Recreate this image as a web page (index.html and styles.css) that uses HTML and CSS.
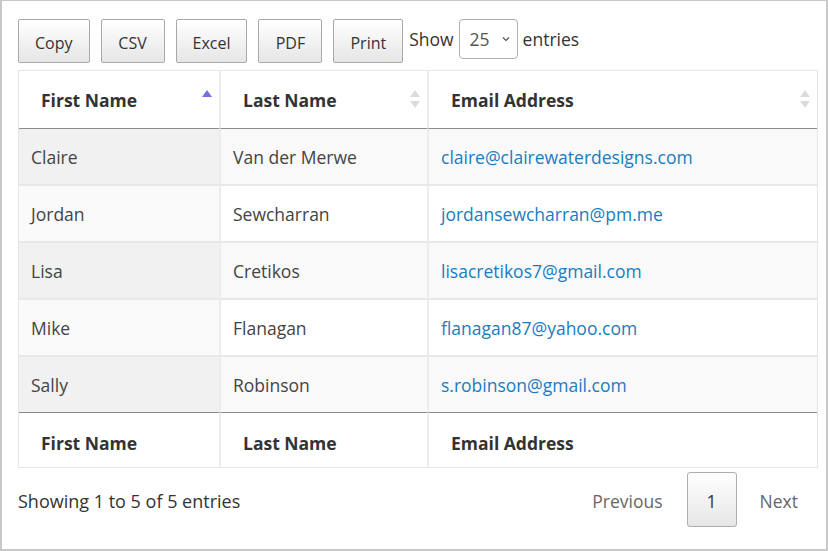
FILE: index.html
```html
<!DOCTYPE html>
<html>
<head>
<meta charset="utf-8">
<link rel="stylesheet" href="styles.css">
</head>
<body>
<div class="frame">
  <div class="toolbar">
    <div class="buttons">
      <button class="btn">Copy</button>
      <button class="btn">CSV</button>
      <button class="btn">Excel</button>
      <button class="btn">PDF</button>
      <button class="btn">Print</button>
    </div>
    <label class="length">Show
      <span class="select"><span class="select-val">25</span><svg class="chev" width="8" height="6" viewBox="0 0 8 6"><path d="M1 1.5 L4 4.5 L7 1.5" fill="none" stroke="#555" stroke-width="1.2"/></svg></span>
      entries</label>
  </div>
  <table class="grid">
    <colgroup><col class="c1"><col class="c2"><col class="c3"></colgroup>
    <thead>
      <tr>
        <th class="sortable">First Name<svg class="sort" width="12" height="22" viewBox="0 0 12 22"><path d="M1 9 L6 2 L11 9 Z" fill="#7272dc"/></svg></th>
        <th class="sortable">Last Name<svg class="sort" width="12" height="22" viewBox="0 0 12 22"><path d="M1 9 L6 2 L11 9 Z M1 13 L6 20 L11 13 Z" fill="#dcdcdc"/></svg></th>
        <th class="sortable">Email Address<svg class="sort" width="12" height="22" viewBox="0 0 12 22"><path d="M1 9 L6 2 L11 9 Z M1 13 L6 20 L11 13 Z" fill="#dcdcdc"/></svg></th>
      </tr>
    </thead>
    <tbody>
      <tr class="odd"><td>Claire</td><td>Van der Merwe</td><td><a href="#">claire@clairewaterdesigns.com</a></td></tr>
      <tr class="even"><td>Jordan</td><td>Sewcharran</td><td><a href="#">jordansewcharran@pm.me</a></td></tr>
      <tr class="odd"><td>Lisa</td><td>Cretikos</td><td><a href="#">lisacretikos7@gmail.com</a></td></tr>
      <tr class="even"><td>Mike</td><td>Flanagan</td><td><a href="#">flanagan87@yahoo.com</a></td></tr>
      <tr class="odd"><td>Sally</td><td>Robinson</td><td><a href="#">s.robinson@gmail.com</a></td></tr>
    </tbody>
    <tfoot>
      <tr><th>First Name</th><th>Last Name</th><th>Email Address</th></tr>
    </tfoot>
  </table>
  <div class="bottom">
    <div class="info">Showing 1 to 5 of 5 entries</div>
    <div class="paging">
      <span class="plink">Previous</span>
      <span class="btn page">1</span>
      <span class="plink next">Next</span>
    </div>
  </div>
</div>
</body>
</html>
```
FILE: styles.css
```css
html, body {
  margin: 0;
  padding: 0;
  background: #fff;
}
.frame {
  box-sizing: border-box;
  width: 828px;
  height: 551px;
  border: 2px solid #c8c8c8;
  border-top-width: 1px;
  padding: 18px 0 0 16px;
  font-family: "Open Sans", "Noto Sans", sans-serif;
  font-size: 17.5px;
  color: #333;
}
.toolbar {
  display: flex;
  align-items: flex-start;
  height: 43px;
}
.buttons {
  display: flex;
  gap: 11px;
}
.btn {
  box-sizing: border-box;
  height: 44px;
  min-width: 64px;
  padding: 3px 16px 0;
  border: 1px solid #a9a9a9;
  border-radius: 2px;
  background: linear-gradient(to bottom, #ffffff 0%, #e6e6e6 100%);
  font-family: "Open Sans", "Noto Sans", sans-serif;
  font-size: 16px;
  color: #333;
  display: inline-flex;
  align-items: center;
  justify-content: center;
}
.length {
  display: flex;
  align-items: center;
  gap: 5px;
  margin-left: 6px;
  height: 40px;
  color: #333;
  font-size: 17.5px;
}
.select {
  box-sizing: border-box;
  width: 59px;
  height: 40px;
  border: 1px solid #b0b0b0;
  border-radius: 4px;
  display: flex;
  align-items: center;
  padding-left: 10px;
  color: #555;
}
.select-val {
  flex: 1;
}
.chev {
  margin-right: 7px;
}
.grid {
  margin-top: 8px;
  width: 800px;
  table-layout: fixed;
  border-collapse: separate;
  border-spacing: 0;
  border: 1px solid #e6e6e6;
}
.c1 { width: 200px; }
.c2 { width: 208px; }
.c3 { width: auto; }
.grid th, .grid td {
  text-align: left;
  vertical-align: middle;
  box-sizing: border-box;
}
.grid th + th, .grid td + td {
  border-left: 2px solid #ececec;
}
.grid thead th {
  height: 58px;
  padding: 1px 22px 0;
  font-weight: 700;
  color: #333;
  border-bottom: 1px solid #8c8c8c;
  position: relative;
}
.sort {
  position: absolute;
  right: 6px;
  top: 17px;
}
.grid td {
  height: 57px;
  padding: 0 12px;
  color: #444;
  border-top: 2px solid #e8e8e8;
}
.grid tbody tr:first-child td {
  border-top: 0;
  height: 55px;
}
.odd td { background: #f9f9f9; }
.odd td:first-child { background: #f1f1f1; }
.even td { background: #ffffff; }
.even td:first-child { background: #fafafa; }
.grid td a {
  color: #1a7cc2;
  text-decoration: none;
}
.grid tfoot th {
  height: 55px;
  padding: 5px 22px 0;
  font-weight: 700;
  color: #333;
  border-top: 1px solid #8c8c8c;
}
.bottom {
  display: flex;
  justify-content: space-between;
  align-items: center;
  width: 800px;
  margin-top: 4px;
}
.info {
  color: #333;
  font-size: 18px;
  padding-top: 2px;
}
.paging {
  display: flex;
  align-items: center;
}
.plink {
  color: #666;
  padding-top: 2px;
}
.page {
  width: 50px;
  min-width: 0;
  height: 55px;
  padding: 2px 0 0;
  margin: 0 23px 0 24px;
  border-color: #adadad;
  border-radius: 3px;
  color: #333;
  font-size: 17.5px;
}
.next {
  margin-right: 20px;
}
```
